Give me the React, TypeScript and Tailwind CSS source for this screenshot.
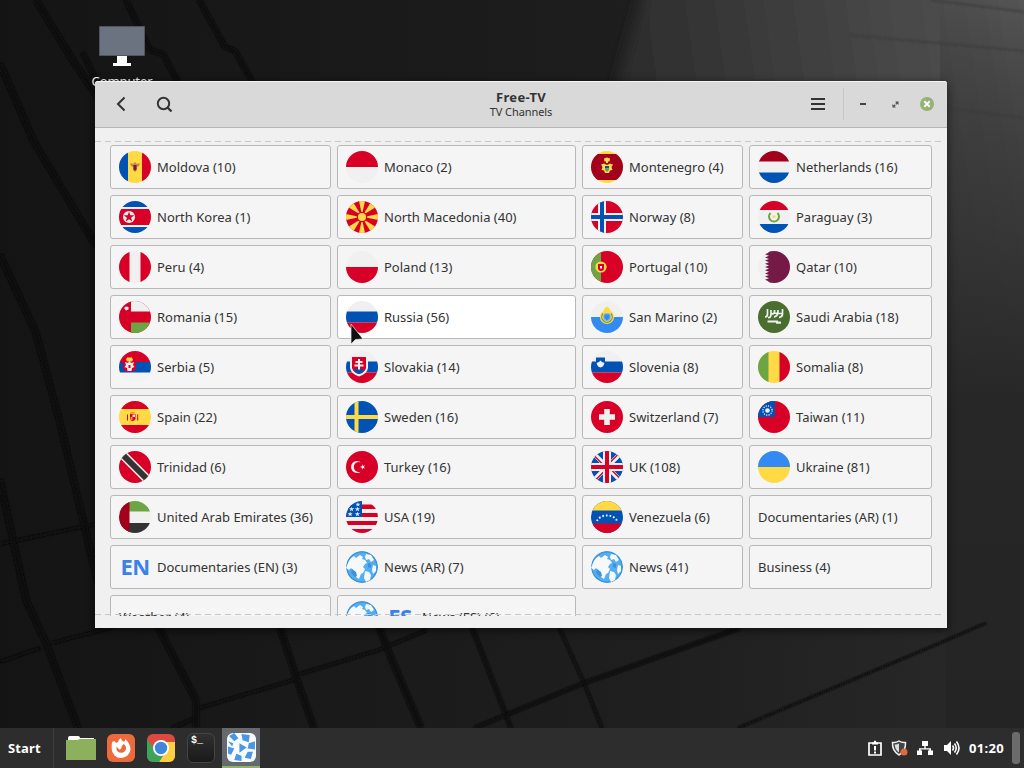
import type { ReactNode } from 'react';

const RED = '#d80027';
const BLUE = '#0052b4';
const WHITE = '#f0f0f0';
const YELLOW = '#ffda44';
const GREEN = '#6da544';

// Round flags, drawn on a 32x32 canvas clipped to a circle
const flags: Record<string, ReactNode> = {
  moldova: (
    <>
      <path fill={YELLOW} d="M0 0h32v32H0z" />
      <path fill={BLUE} d="M0 0h9v32H0z" />
      <path fill={RED} d="M23 0h9v32h-9z" />
      <path fill="#c8873a" d="m11 12 3 1 2-2 2 2 3-1-1 3-2 1v3l-2 2-2-2v-3l-2-1z" />
      <path fill="#751a46" d="M14.500 14h3v4l-1.500 2-1.500-2z" />
    </>
  ),
  monaco: (
    <>
      <path fill={WHITE} d="M0 0h32v32H0z" />
      <path fill={RED} d="M0 0h32v16H0z" />
    </>
  ),
  montenegro: (
    <>
      <path fill={YELLOW} d="M0 0h32v32H0z" />
      <path fill="#a2001d" d="M0 3h32v26H0z" />
      <path fill={YELLOW} d="M13 7.500 16 6.500l3 1-.5 3h-5zM15 10h2v2h-2zM10 13.500l3-1 3 1.500 3-1.500 3 1-1.500 2.500 1 3-2.500.5-1 2.500h-4l-1-2.500-2.500-.5 1-3z" />
      <path fill={BLUE} d="M14 15h4v2.500h-4z" />
      <path fill={GREEN} d="M14 17.500h4v1.500l-2 2-2-2z" />
    </>
  ),
  netherlands: (
    <>
      <path fill={WHITE} d="M0 0h32v32H0z" />
      <path fill="#a2001d" d="M0 0h32v10.500H0z" />
      <path fill={BLUE} d="M0 21.500h32V32H0z" />
    </>
  ),
  northKorea: (
    <>
      <path fill={WHITE} d="M0 0h32v32H0z" />
      <path fill={BLUE} d="M0 0h32v6H0zM0 26h32v6H0z" />
      <path fill={RED} d="M0 8h32v16H0z" />
      <circle cx="10" cy="16" r="6" fill={WHITE} />
      <path fill={RED} d="m10 10.500 1.300 3.800h4l-3.200 2.400 1.200 3.900-3.300-2.400-3.300 2.400 1.200-3.900-3.200-2.400h4z" />
    </>
  ),
  macedonia: (
    <>
      <path fill={RED} d="M0 0h32v32H0z" />
      <path
        fill={YELLOW}
        d="M13 0h6l-3 14zM13 32h6l-3-14zM0 13v6l14-3zM32 13v6l-14-3zM2 6l5-5 8 13zM30 6l-5-5-8 13zM2 26l5 5 8-13zM30 26l-5 5-8-13z"
      />
      <circle cx="16" cy="16" r="5.200" fill={RED} />
      <circle cx="16" cy="16" r="4" fill={YELLOW} />
    </>
  ),
  norway: (
    <>
      <path fill={RED} d="M0 0h32v32H0z" />
      <path fill={WHITE} d="M7 0h8v32H7zM0 12h32v8H0z" />
      <path fill={BLUE} d="M9 0h4v32H9zM0 14h32v4H0z" />
    </>
  ),
  paraguay: (
    <>
      <path fill={WHITE} d="M0 0h32v32H0z" />
      <path fill={RED} d="M0 0h32v9H0z" />
      <path fill={BLUE} d="M0 23h32v9H0z" />
      <path fill="none" stroke={GREEN} strokeWidth="2" d="M12.500 12a5 5 0 1 0 7 0" />
      <circle cx="16" cy="15.500" r="1.500" fill={YELLOW} />
    </>
  ),
  peru: (
    <>
      <path fill={WHITE} d="M0 0h32v32H0z" />
      <path fill={RED} d="M0 0h10.500v32H0zM21.500 0H32v32H21.500z" />
    </>
  ),
  poland: (
    <>
      <path fill={WHITE} d="M0 0h32v32H0z" />
      <path fill={RED} d="M0 16h32v16H0z" />
    </>
  ),
  portugal: (
    <>
      <path fill={RED} d="M0 0h32v32H0z" />
      <path fill={GREEN} d="M0 0h10v32H0z" />
      <circle cx="10" cy="16" r="5.600" fill={YELLOW} />
      <path fill={RED} d="M7 13h6v4a3 3 0 0 1-6 0z" />
      <path fill={WHITE} d="M9 15h2v2.500H9z" />
    </>
  ),
  qatar: (
    <>
      <path fill={WHITE} d="M0 0h32v32H0z" />
      <path
        fill="#751a46"
        d="M32 0H7l4 1.600-4 1.600 4 1.600-4 1.600L11 8 7 9.600l4 1.600-4 1.600 4 1.600L7 16l4 1.600-4 1.600 4 1.600-4 1.600 4 1.600-4 1.600 4 1.600-4 1.600 4 1.600L7 32h25z"
      />
    </>
  ),
  oman: (
    <>
      <path fill={RED} d="M0 0h32v32H0z" />
      <path fill={WHITE} d="M12 0h20v10.500H12z" />
      <path fill={GREEN} d="M12 21.500h20V32H12z" />
      <path fill={WHITE} d="m5 7 2-1.500 2.500.5v2.500L7 9.500z" />
    </>
  ),
  russia: (
    <>
      <path fill={WHITE} d="M0 0h32v32H0z" />
      <path fill={BLUE} d="M0 10.500h32v11H0z" />
      <path fill={RED} d="M0 21.500h32V32H0z" />
    </>
  ),
  sanMarino: (
    <>
      <path fill={WHITE} d="M0 0h32v32H0z" />
      <path fill="#338af3" d="M0 16h32v16H0z" />
      <path fill={YELLOW} d="m12.500 10 1-2.500L16 5.500l2.500 2 1 2.500z" />
      <circle cx="16" cy="16" r="5.500" fill="#7db6ee" stroke={YELLOW} strokeWidth="3.200" />
      <path fill="none" stroke={GREEN} strokeWidth="1.300" d="M12 12.500a5.300 5.300 0 1 0 8 0" />
      <path fill="#338af3" d="M13.500 13.500h5v3.500L16 19.500 13.500 17z" />
    </>
  ),
  saudi: (
    <>
      <path fill="#496e2d" d="M0 0h32v32H0z" />
      <path
        fill="none"
        stroke={WHITE}
        strokeWidth="1.700"
        d="M9.500 8v5q0 3-2.500 3M13 9v4q0 4-3 3.500M13 12.500q3 1 3.500-1.500V9M16.500 12q3 1 3.500-1V9M20 11q0 4-4 5M24.500 8v5q0 3-3.500 3.500M20 12.500h4"
      />
      <path fill={WHITE} d="M9.500 19.500H20v1h3v2.200h-5v-1.200H9.500z" />
    </>
  ),
  serbia: (
    <>
      <path fill="#f3f3f4" d="M0 0h32v32H0z" />
      <path fill={RED} d="M0 0h32v11H0z" />
      <path fill={BLUE} d="M0 11h32v10.500H0z" />
      <path fill={RED} d="M4 10h13v7q-1.500 4-6.500 4T4 17z" />
      <path fill={YELLOW} d="m7 9 1-2.500h5L14 9l-1.500 1.500h-4z" />
      <path fill={WHITE} d="m10.500 10 1.500 2 3-1-1 3 1.500 2-2.500 1-.5 3h-4L8 17l-2.500-1L7 14l-1-3 3 1z" />
      <path fill={RED} d="M9.500 14h2v3h-2z" />
    </>
  ),
  slovakia: (
    <>
      <path fill={WHITE} d="M0 0h32v32H0z" />
      <path fill={BLUE} d="M0 10.500h32v11H0z" />
      <path fill={RED} d="M0 21.500h32V32H0z" />
      <path fill={WHITE} d="M4 5h18v12q-1 6-9 8.500Q5 23 4 17z" />
      <path fill={RED} d="M6 6h14v11q-1 4-7 6-6-2-7-6z" />
      <path fill={BLUE} d="M7.500 19.500Q10 17 13 18q3-1 5.500 1.500Q17 22 13 23q-4-1-5.500-3.500z" />
      <path fill={WHITE} d="M12 8h2v2h2.500v2H14v1.500h3.500v2H14v3h-2v-3H8.500v-2H12V12H9.500v-2H12z" />
    </>
  ),
  slovenia: (
    <>
      <path fill={WHITE} d="M0 0h32v32H0z" />
      <path fill={BLUE} d="M0 10.500h32v11H0z" />
      <path fill={RED} d="M0 21.500h32V32H0z" />
      <path fill={BLUE} d="M5 6.500h9V12q-1 4-4.500 5Q6 16 5 12z" />
      <path fill={WHITE} d="M5.500 12 8 11l1.500-1.500L11 11l2.500 1q-1 4-4 4.500-3-.5-4-4.500z" />
    </>
  ),
  mali: (
    <>
      <path fill={YELLOW} d="M0 0h32v32H0z" />
      <path fill={GREEN} d="M0 0h10.500v32H0z" />
      <path fill={RED} d="M21.500 0H32v32H21.500z" />
    </>
  ),
  spain: (
    <>
      <path fill={YELLOW} d="M0 0h32v32H0z" />
      <path fill={RED} d="M0 0h32v8H0zM0 24h32v8H0z" />
      <path fill={RED} d="M11 13h5.500v5q-1 2-3 2T11 18zM8 13.500h1v6H8zM18.200 13.500h1v6h-1z" />
      <path fill="#ff9811" d="M11 11h5l-.5 1.800h-4z" />
      <path fill={WHITE} d="M13.500 13.500H16V16h-2.500z" />
      <path fill="#ff9811" d="M11.500 16h2v3h-2z" />
    </>
  ),
  sweden: (
    <>
      <path fill={BLUE} d="M0 0h32v32H0z" />
      <path fill={YELLOW} d="M8.500 0h4v32h-4zM0 14h32v4H0z" />
    </>
  ),
  switzerland: (
    <>
      <path fill={RED} d="M0 0h32v32H0z" />
      <path fill={WHITE} d="M13.200 8h5.600v5.200H24v5.600h-5.200V24h-5.600v-5.200H8v-5.600h5.200z" />
    </>
  ),
  taiwan: (
    <>
      <path fill={RED} d="M0 0h32v32H0z" />
      <path fill={BLUE} d="M0 0h17v16H0z" />
      <circle cx="9.500" cy="9.500" r="4.600" fill="none" stroke={WHITE} strokeWidth="1.300" strokeDasharray="1.200 1.200" />
      <circle cx="9.500" cy="9.500" r="2.300" fill={WHITE} />
    </>
  ),
  trinidad: (
    <>
      <path fill={RED} d="M0 0h32v32H0z" />
      <path stroke={WHITE} strokeWidth="9" d="m0 0 32 32" />
      <path stroke="#333" strokeWidth="6" d="m0 0 32 32" />
    </>
  ),
  turkey: (
    <>
      <path fill={RED} d="M0 0h32v32H0z" />
      <path fill={WHITE} d="M15 11.500a6 6 0 1 0 0 9 5 5 0 1 1 0-9z" />
      <path fill={WHITE} d="m16 13.300 1.100 1.600 1.900-.6-1.100 1.700 1.100 1.600-1.900-.5-1.200 1.600v-2l-1.900-.7 1.900-.7z" />
    </>
  ),
  uk: (
    <>
      <path fill={BLUE} d="M0 0h32v32H0z" />
      <path stroke={WHITE} strokeWidth="4.500" d="m0 0 32 32M32 0 0 32" />
      <path stroke={RED} strokeWidth="1.300" d="m0 1.500 15 15M17 15.500l15 15M30.500 0l-15 15M16.500 17l-15 15" />
      <path fill={WHITE} d="M12 0h8v32h-8zM0 12h32v8H0z" />
      <path fill={RED} d="M14 0h4v32h-4zM0 14h32v4H0z" />
    </>
  ),
  ukraine: (
    <>
      <path fill={YELLOW} d="M0 0h32v32H0z" />
      <path fill="#338af3" d="M0 0h32v16H0z" />
    </>
  ),
  uae: (
    <>
      <path fill={WHITE} d="M0 0h32v32H0z" />
      <path fill={GREEN} d="M0 0h32v10.500H0z" />
      <path fill="#333" d="M0 22h32v10H0z" />
      <path fill="#a2001d" d="M0 0h10.500v32H0z" />
    </>
  ),
  usa: (
    <>
      <path fill={WHITE} d="M0 0h32v32H0z" />
      <path fill={RED} d="M0 3.500h32V8H0zM0 12h32v4H0zM0 20h32v4H0zM0 28h32v4H0z" />
      <path fill={BLUE} d="M0 0h16v16H0z" />
      <path
        fill="#dce8f5"
        d="M3 7.200h2l.6-1.500.7 1.500h2L6.700 8.500l.6 1.700-1.700-1-1.700 1 .6-1.700zM8.800 7.200h2l.6-1.500.7 1.500h2l-1.600 1.300.6 1.700-1.700-1-1.700 1 .6-1.700zM1.500 12.200h2l.6-1.500.7 1.500h2l-1.600 1.300.6 1.700-1.700-1-1.700 1 .6-1.700zM8.800 12.200h2l.6-1.500.7 1.500h2l-1.600 1.300.6 1.700-1.700-1-1.700 1 .6-1.700zM9.500 2.800h1.800l.6-1.500.7 1.500h1.800l-1.500 1.100.6 1.700-1.600-1-1.600 1 .6-1.700z"
      />
    </>
  ),
  venezuela: (
    <>
      <path fill={BLUE} d="M0 0h32v32H0z" />
      <path fill={YELLOW} d="M0 0h32v9.500H0z" />
      <path fill={RED} d="M0 22.500h32V32H0z" />
      <path fill="none" stroke={WHITE} strokeWidth="1.900" strokeDasharray="1.700 1.900" d="M6 20a10.500 8 0 0 1 20 0" />
    </>
  ),
  globe: (
    <>
      <circle cx="16" cy="16" r="16" fill="#3a92dc" />
      <circle cx="16" cy="16" r="14.500" fill="#55aeef" />
      {/* Light land masses over a blue sea */}
      <path
        fill="#f6f9fb"
        d="M2 12q2-5 6-7l2 2 4-3 3 2-1 2 3 1 2 3-2 1-2 3 2 2-2 4-2 1-2 5-3-2-1-5-4-4-2 2-3-2z"
      />
      <path fill="#f6f9fb" d="m19 20 4 1 2 3-1 5-4 2-2-4z" />
      <path fill="#f6f9fb" d="m20 3 5 1 3 5-3 2-2-3-3 1-1-3z" />
      <path fill="#f6f9fb" d="m27 14 3 1v5l-3 3-1-4z" />
      <path fill="#3a92dc" d="m6 18 4 3 1 4-2 1-4-4zM22 12l3 1v4l-3-1z" />
    </>
  ),
};

type Channel = { name: string; flag?: string; lang?: string; hover?: boolean };

const channels: Channel[] = [
  { name: 'Moldova (10)', flag: 'moldova' },
  { name: 'Monaco (2)', flag: 'monaco' },
  { name: 'Montenegro (4)', flag: 'montenegro' },
  { name: 'Netherlands (16)', flag: 'netherlands' },
  { name: 'North Korea (1)', flag: 'northKorea' },
  { name: 'North Macedonia (40)', flag: 'macedonia' },
  { name: 'Norway (8)', flag: 'norway' },
  { name: 'Paraguay (3)', flag: 'paraguay' },
  { name: 'Peru (4)', flag: 'peru' },
  { name: 'Poland (13)', flag: 'poland' },
  { name: 'Portugal (10)', flag: 'portugal' },
  { name: 'Qatar (10)', flag: 'qatar' },
  { name: 'Romania (15)', flag: 'oman' },
  { name: 'Russia (56)', flag: 'russia', hover: true },
  { name: 'San Marino (2)', flag: 'sanMarino' },
  { name: 'Saudi Arabia (18)', flag: 'saudi' },
  { name: 'Serbia (5)', flag: 'serbia' },
  { name: 'Slovakia (14)', flag: 'slovakia' },
  { name: 'Slovenia (8)', flag: 'slovenia' },
  { name: 'Somalia (8)', flag: 'mali' },
  { name: 'Spain (22)', flag: 'spain' },
  { name: 'Sweden (16)', flag: 'sweden' },
  { name: 'Switzerland (7)', flag: 'switzerland' },
  { name: 'Taiwan (11)', flag: 'taiwan' },
  { name: 'Trinidad (6)', flag: 'trinidad' },
  { name: 'Turkey (16)', flag: 'turkey' },
  { name: 'UK (108)', flag: 'uk' },
  { name: 'Ukraine (81)', flag: 'ukraine' },
  { name: 'United Arab Emirates (36)', flag: 'uae' },
  { name: 'USA (19)', flag: 'usa' },
  { name: 'Venezuela (6)', flag: 'venezuela' },
  { name: 'Documentaries (AR) (1)' },
  { name: 'Documentaries (EN) (3)', lang: 'EN' },
  { name: 'News (AR) (7)', flag: 'globe' },
  { name: 'News (41)', flag: 'globe' },
  { name: 'Business (4)' },
  { name: 'Weather (4)' },
  { name: 'News (ES) (6)', flag: 'globe', lang: 'ES' },
];

function Wallpaper() {
  return (
    <svg className="absolute inset-0" width="1024" height="768" viewBox="0 0 1024 768">
      <defs>
        <linearGradient id="base" x1="0" y1="0" x2="1" y2="0">
          <stop offset="0" stopColor="#141414" />
          <stop offset="0.300" stopColor="#191919" />
          <stop offset="0.700" stopColor="#1f1f1f" />
          <stop offset="1" stopColor="#272727" />
        </linearGradient>
        <linearGradient id="light" gradientUnits="userSpaceOnUse" x1="600" y1="60" x2="1024" y2="0">
          <stop offset="0" stopColor="#2a2a2a" />
          <stop offset="0.500" stopColor="#404040" />
          <stop offset="1" stopColor="#545454" />
        </linearGradient>
        <linearGradient id="shade" gradientUnits="userSpaceOnUse" x1="0" y1="0" x2="0" y2="728">
          <stop offset="0" stopColor="#262626" stopOpacity="0" />
          <stop offset="0.200" stopColor="#2c2c2c" stopOpacity="0.500" />
          <stop offset="0.550" stopColor="#272727" stopOpacity="1" />
          <stop offset="1" stopColor="#242424" />
        </linearGradient>
        <filter id="soft" x="-10%" y="-20%" width="120%" height="140%">
          <feGaussianBlur stdDeviation="7" />
        </filter>
        <filter id="edge" filterUnits="userSpaceOnUse" x="0" y="0" width="1024" height="768">
          <feGaussianBlur stdDeviation="0.800" />
        </filter>
      </defs>
      <path fill="url(#base)" d="M0 0h1024v768H0z" />
      <path fill="url(#light)" filter="url(#soft)" d="M652-40h420v540H500z" />
      <path fill="url(#shade)" d="M940 0h84v728h-84z" />
      <path fill="url(#base)" d="M0 628h946v100H0z" />
      <g fill="none" stroke="#080808" filter="url(#edge)">
        <path strokeWidth="6" d="M36 0l39 64 22 32M0 64l34 78 62 104M0 255l36 78 24 90 38 160M0 480l26 120 20 43 32 85" />
        <path strokeWidth="5" d="M126 0l24 50 13 4 16 30M199 0l26 47 10 4 18 32M83 53l14 30" />
        <path strokeWidth="6" d="M157 625l39 75v28M279 625l18 55 17 48M378 625l14 35 29 68" />
        <path strokeWidth="4" d="M471 625l40 103" />
        <path strokeWidth="3" d="M558 625l26 58 18 45" />
        <path strokeWidth="3" d="M0 544l96-20M0 662l40-14M52 643l62-16M196 709l101-30M300 674l79-24 48-20" />
        <path strokeWidth="4" d="M172 728l24-10M474 728l110-45 156-55" />
        <path strokeWidth="2" d="M738 728l202-85 46-20" />
      </g>
      <g fill="none" stroke="#3a3a3a" strokeWidth="1.500" filter="url(#edge)">
        <path d="M850 35l174 16M930 0l94 12M947 108l77 10" />
      </g>
    </svg>
  );
}

function ChannelButton({ channel }: { channel: Channel }) {
  return (
    <button
      className={`flex h-11 items-center gap-1.5 rounded-[3px] border border-[#b8b8b8] px-2 text-left ${
        channel.hover ? 'bg-white' : 'bg-[#f5f5f5]'
      }`}
    >
      {channel.flag && (
        <svg className="h-8 w-8 shrink-0 rounded-full" viewBox="0 0 32 32">
          {flags[channel.flag]}
        </svg>
      )}
      {channel.lang && (
        <span className="w-8 shrink-0 pb-0.5 text-center text-[22px] leading-8 font-bold tracking-[-0.5px] text-[#3b82e8]">
          {channel.lang}
        </span>
      )}
      <span className="pt-0.5 whitespace-nowrap">{channel.name}</span>
    </button>
  );
}

function TitleBar() {
  return (
    <header className="flex h-[47px] shrink-0 items-center rounded-t-[3px] border-t border-b border-t-[#f4f4f4] border-b-[#b5b5b5] bg-[#d9d9d9] pb-px text-[#333]">
      <div className="flex w-[200px] items-center gap-7 pl-[19px]">
        <svg width="14" height="16" viewBox="0 0 14 16" fill="none" stroke="currentColor" strokeWidth="2">
          <path d="M10.500 1.500 4 8l6.500 6.500" />
        </svg>
        <svg width="17" height="17" viewBox="0 0 17 17" fill="none" stroke="currentColor" strokeWidth="2">
          <circle cx="7.500" cy="7.500" r="5.700" />
          <path d="m11.500 11.500 4 4" strokeWidth="2.300" />
        </svg>
      </div>
      <div className="flex flex-1 flex-col items-center">
        <h1 className="text-[13px] leading-[15px] font-bold tracking-[0.3px]">Free-TV</h1>
        <p className="text-[11px] leading-[14px] tracking-[-0.1px]">TV Channels</p>
      </div>
      <div className="flex h-full w-[200px] items-center justify-end pr-[13px]">
        <svg className="mr-[17px]" width="16" height="14" viewBox="0 0 16 14" fill="#333">
          <path d="M1 1h14v2H1zM1 6h14v2H1zM1 11h14v2H1z" />
        </svg>
        <div className="mr-4 h-8 w-px bg-[#c6c6c6]" />
        <svg className="mr-[25px]" width="7" height="2" fill="#444">
          <path d="M0 0h6v2H0z" />
        </svg>
        <svg className="mr-[21px]" width="7" height="7" viewBox="0 0 8 8" fill="#555">
          <path d="M3.500.5H7.500v4L6 3.200 5 4.200 3.800 3 4.800 2zM.5 3.500 2 4.800l1-1L4.200 5l-1 1 1.300 1.500h-4z" />
        </svg>
        <svg width="14" height="14" viewBox="0 0 14 14">
          <circle cx="7" cy="7" r="7" fill="#92b372" />
          <path d="m4.300 4.300 5.400 5.400M9.700 4.300 4.300 9.700" stroke="#fff" strokeWidth="2" />
        </svg>
      </div>
    </header>
  );
}

function Dashes() {
  return (
    <svg className="block w-full" height="1">
      <path d="M0 .5h848" stroke="#c8c8c8" strokeDasharray="6 4" />
    </svg>
  );
}

function Taskbar() {
  return (
    <footer className="relative flex h-10 items-center bg-[#2d2d2d] text-white">
      <span className="w-[53px] pt-0.5 pl-2 text-[13px] font-bold tracking-[0.15px]">Start</span>
      <div className="h-full w-px bg-[#3c3c3c]" />
      {/* Files */}
      <div className="flex w-[53px] justify-center">
        <svg width="30" height="26" viewBox="0 0 30 26">
          <path fill="#fff" d="M2 3q0-2 2-2h8q2 0 2 2h14v5H2z" />
          <path fill="#8db05c" d="M0 5h11l3-1h16v21H0z" />
        </svg>
      </div>
      {/* Firefox */}
      <div className="flex w-[28px] justify-center">
        <svg width="28" height="28" viewBox="0 0 28 28">
          <rect width="28" height="28" rx="6" fill="#ec6a3c" />
          <path
            fill="#fff"
            d="M5 8l2-1q1 0 2 2l2-1q0-2 3-4 0 2 2 3.500h1Q18.500 7 18 5q5 4 5.500 9.500A9.300 9.300 0 0 1 14 24a9.300 9.300 0 0 1-9.300-9Q4.500 11 5 8z"
          />
          <path fill="#ec6a3c" d="M9.500 13q3 1.500 5-.5l2-2.500q3 2 2.500 5a5 5 0 0 1-9.500.5z" />
          <path fill="#fff" d="M10 12.500h5q-.5 2.500-3 3z" />
        </svg>
      </div>
      {/* Chrome */}
      <div className="ml-3 flex w-[28px] justify-center">
        <svg className="rounded-[6px]" width="28" height="28" viewBox="0 0 28 28">
          <path fill="#dc4a3f" d="M0 0h28v28H0z" />
          <path fill="#fdcf41" d="M14 8h14v20H12l7-11z" />
          <path fill="#3fa35a" d="M0 5l9 12 8 3-5 8H0z" />
          <circle cx="14" cy="14" r="8" fill="#fff" />
          <circle cx="14" cy="14" r="6.200" fill="#3f86dd" />
        </svg>
      </div>
      {/* Terminal */}
      <div className="ml-3 h-[30px] w-7 rounded-[6px] border border-[#454545] bg-linear-to-b from-[#303030] to-[#1a1a1a] pl-[3px] font-['Liberation_Mono'] text-[10px] leading-[13px] font-bold">
        $_
      </div>
      {/* Hypnotix, the active window */}
      <div className="ml-[7px] flex h-10 w-[38px] items-center justify-center border-b-2 border-[#8fb36d] bg-[#66696e]">
        <svg className="rounded-[6px]" width="29" height="29" viewBox="0 0 28 28">
          <path fill="#f7fbff" d="M0 0h28v28H0z" />
          <path
            fill="#4a97e4"
            d="M2 3l5-3 4 5-4 3zM14 1l8 1-1 7-6-2zM27 8v8l-7-1 1-5zM25 18l-2 7-6-1 3-6zM14 27l-7-1 2-6 5 2zM1 13l6 2-3 6-3-1zM1 8l5 2-1 3zM12 10l7 4-7 5z"
          />
        </svg>
      </div>
      <div className="ml-auto flex items-center pr-5">
        <svg className="mr-2" width="16" height="16" viewBox="0 0 16 16">
          <path fill="none" stroke="#fff" strokeWidth="1.700" d="M2 3h12v12H2z" />
          <path fill="#fff" d="M5 2.500h1.500Q7 .5 8 .5t1.500 2H11v2H5zM7 6h2v4.500H7zM7 11.500h2v2H7z" />
        </svg>
        <svg className="mr-[9px]" width="17" height="16" viewBox="0 0 17 16">
          <path fill="#444" stroke="#eee" strokeWidth="1.500" d="M8 1q3 2 6.500 1.500Q15 11 8 15 1 11 1.500 2.500 5 3 8 1z" />
          <path fill="#ddd" d="M8 3.500v9Q4 10 3.700 4.500 6 4.800 8 3.500z" />
          <circle cx="13" cy="12" r="3.500" fill="#df6a3d" />
        </svg>
        <svg className="mr-2.5" width="16" height="16" viewBox="0 0 16 16" fill="#fff">
          <path d="M5 1h6v5H8.700v2.300H14v2.200h2V15h-5v-4.500h1.300v-1H3.700v1H5V15H0v-4.500h2V8.300h5.300V6H5z" />
        </svg>
        <svg className="mr-[9px]" width="17" height="16" viewBox="0 0 17 16">
          <path fill="#fff" d="M1 5h3l4-4v14l-4-4H1z" />
          <path fill="none" stroke="#fff" strokeWidth="1.600" d="M9.500 5.500q2 2.500 0 5M11.500 3.500q3.500 4.500 0 9M13.500 1.500q5 6.500 0 13" />
        </svg>
        <span className="pt-0.5 text-[13px] font-bold tracking-[0.3px]">01:20</span>
      </div>
      <div className="absolute top-1 right-1 h-8 w-2 rounded-[3px] bg-[#6b6b6b]" />
    </footer>
  );
}

export default function App() {
  return (
    <div className="relative flex h-[768px] w-[1024px] flex-col overflow-hidden bg-[#191919] font-['Noto_Sans',sans-serif]">
      <Wallpaper />
      <main className="relative flex-1">
        {/* Desktop shortcut */}
        <div className="absolute top-[26px] left-[82px] flex w-20 flex-col items-center">
          <svg width="46" height="41" viewBox="0 0 46 41">
            <path fill="#6b7380" stroke="#4f5560" d="M.5.500h45v29H.5z" />
            <path fill="#fff" d="M18 30h10v7h4v3H14v-3h4z" />
          </svg>
          <span className="mt-[5px] text-[13px] leading-[18px] tracking-[-0.1px] text-white">Computer</span>
        </div>

        {/* App window */}
        <div className="absolute top-[81px] left-[95px] flex h-[547px] w-[852px] flex-col rounded-t-[3px] bg-[#f0f0f0] shadow-[0_2px_10px_rgba(0,0,0,0.6)]">
          <TitleBar />
          <div className="relative mt-3 h-[476px] overflow-hidden">
            <div className="grid grid-cols-[221px_239px_161px_183px] gap-1.5 px-[15px] pt-[5px] text-[13px] text-[#333]">
              {channels.map((channel) => (
                <ChannelButton key={channel.name} channel={channel} />
              ))}
            </div>
            <div className="absolute top-px left-0 w-full">
              <Dashes />
            </div>
            <div className="absolute bottom-px left-0 w-full">
              <Dashes />
            </div>
          </div>
        </div>

        {/* Mouse pointer */}
        <svg className="absolute top-[323px] left-[350px]" width="14" height="24" viewBox="0 0 14 24">
          <path fill="#111" stroke="#eee" strokeWidth=".7" d="M1 1v20l4.500-4.500L13 16z" />
        </svg>
      </main>
      <Taskbar />
    </div>
  );
}
